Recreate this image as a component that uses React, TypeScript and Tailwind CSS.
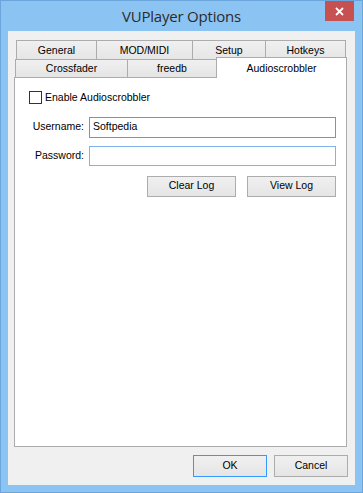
import React from "react";

const ui = { fontFamily: '"Liberation Sans", Arial, sans-serif' };

function BackTab({ label, w }: { label: string; w: string }) {
  return (
    <div
      className={`${w} -ml-px first:ml-0 h-full flex items-center justify-center border border-b-0 border-[#acacac] bg-gradient-to-b from-[#f0f0f0] to-[#e5e5e5] text-black`}
    >
      {label}
    </div>
  );
}

function Btn({ label, w, def }: { label: string; w: string; def?: boolean }) {
  return (
    <button
      className={`${w} flex items-center justify-center border bg-gradient-to-b from-[#f0f0f0] to-[#e5e5e5] text-black ${
        def ? "border-[#3399ff]" : "border-[#acacac]"
      }`}
    >
      {label}
    </button>
  );
}

export default function App() {
  return (
    <div
      className="w-[363px] h-[493px] bg-[#8bc3f3] border border-[#6aa6dc] flex flex-col text-[10.5px]"
      style={ui}
    >
      {/* Title bar */}
      <div className="relative h-[30px] flex items-center justify-center">
        <span
          className="text-[15px] text-[#2b2b2b] tracking-[-0.2px]"
          style={{ fontFamily: '"Open Sans", "Noto Sans", sans-serif' }}
        >
          VUPlayer Options
        </span>
        <div className="absolute top-0 right-[8px] w-[29px] h-[20px] bg-[#c75050] flex items-center justify-center">
          <svg width="9" height="9" viewBox="0 0 9 9">
            <path d="M1 1 L8 8 M8 1 L1 8" stroke="white" strokeWidth="1.8" />
          </svg>
        </div>
      </div>

      {/* Client area */}
      <div className="mx-[7px] h-[454px] bg-[#f0f0f0] flex flex-col">
        {/* Tab control */}
        <div className="ml-[6px] mt-[9px] w-[333px] flex flex-col">
          <div className="flex h-[20px] pl-[2px]">
            <BackTab label="General" w="w-[81px]" />
            <BackTab label="MOD/MIDI" w="w-[97px]" />
            <BackTab label="Setup" w="w-[74px]" />
            <BackTab label="Hotkeys" w="w-[81px]" />
          </div>
          <div className="flex h-[18px] -mt-px pl-[1px] items-end">
            <BackTab label="Crossfader" w="w-[113px]" />
            <BackTab label="freedb" w="w-[90px]" />
            <div className="relative z-10 -ml-px w-[131px] h-[21px] mb-[-1px] flex items-start pt-[3px] justify-center bg-white border border-b-0 border-[#acacac] text-black">
              Audioscrobbler
            </div>
          </div>
          {/* Panel */}
          <div className="h-[370px] bg-white border border-[#acacac] flex flex-col text-black">
            <label className="mt-[12px] ml-[14px] flex items-center gap-[3px]">
              <span className="w-[13px] h-[13px] border border-[#333333] bg-white" />
              <span>Enable Audioscrobbler</span>
            </label>

            <div className="mt-[11px] flex items-center">
              <span className="w-[69px] text-right">Username:</span>
              <div className="ml-[5px] w-[247px] h-[21px] border border-[#569de5] flex items-center px-[3px]">
                Softpedia
              </div>
            </div>
            <div className="mt-[8px] flex items-center">
              <span className="w-[69px] text-right">Password:</span>
              <div className="ml-[5px] w-[247px] h-[20px] border border-[#7eb4ea]" />
            </div>

            <div className="mt-[10px] ml-[132px] flex gap-[11px] h-[21px]">
              <Btn label="Clear Log" w="w-[89px]" />
              <Btn label="View Log" w="w-[89px]" />
            </div>
          </div>
        </div>

        {/* Dialog buttons */}
        <div className="mt-[8px] flex justify-end gap-[7px] pr-[7px] h-[22px]">
          <Btn label="OK" w="w-[74px]" def />
          <Btn label="Cancel" w="w-[74px]" />
        </div>
      </div>
    </div>
  );
}
